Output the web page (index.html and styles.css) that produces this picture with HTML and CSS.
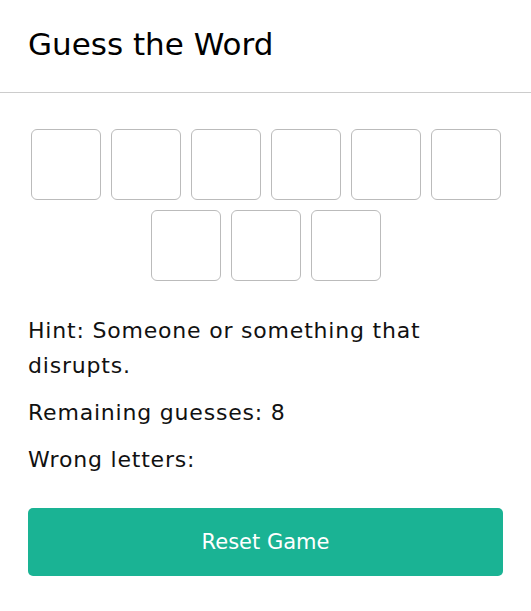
FILE: index.html
```html
<!DOCTYPE html>
<html lang="en">
<head>
<meta charset="utf-8">
<title>Guess the Word</title>
<link rel="stylesheet" href="styles.css">
</head>
<body>
<div class="app">
  <header class="header">
    <h1 class="title">Guess the Word</h1>
  </header>
  <main class="main">
    <div class="letters">
      <div class="box"></div>
      <div class="box"></div>
      <div class="box"></div>
      <div class="box"></div>
      <div class="box"></div>
      <div class="box"></div>
      <div class="box"></div>
      <div class="box"></div>
      <div class="box"></div>
    </div>
    <p class="hint">Hint: Someone or something that disrupts.</p>
    <p class="info">Remaining guesses: 8</p>
    <p class="info">Wrong letters: </p>
    <button class="reset" type="button">Reset Game</button>
  </main>
</div>
</body>
</html>
```
FILE: styles.css
```css
* { box-sizing: border-box; }
html, body {
  margin: 0;
  padding: 0;
  background: #ffffff;
}
body {
  font-family: "DejaVu Sans", "Noto Sans", sans-serif;
  color: #111111;
}
.header {
  height: 93px;
  padding: 0 28px;
  border-bottom: 1px solid #cccccc;
  display: flex;
  align-items: center;
}
.title {
  margin: 0;
  font-size: 31px;
  font-weight: 400;
  color: #000000;
  line-height: 1;
  position: relative;
  top: -2px;
}
.main {
  padding: 36px 28px 0;
}
.letters {
  display: flex;
  flex-wrap: wrap;
  justify-content: center;
  gap: 10px;
}
.box {
  width: 70px;
  height: 71px;
  border: 1px solid #bbbbbb;
  border-radius: 6px;
}
.hint, .info {
  margin: 0;
  font-size: 22px;
  line-height: 35px;
  letter-spacing: 0.8px;
}
.hint {
  margin-top: 32px;
}
.info {
  margin-top: 12px;
}
.reset {
  display: block;
  width: 100%;
  height: 68px;
  margin-top: 31px;
  border: none;
  border-radius: 5px;
  background: #1ab394;
  color: #ffffff;
  font-family: "DejaVu Sans", "Noto Sans", sans-serif;
  font-size: 21px;
  cursor: pointer;
}
```
